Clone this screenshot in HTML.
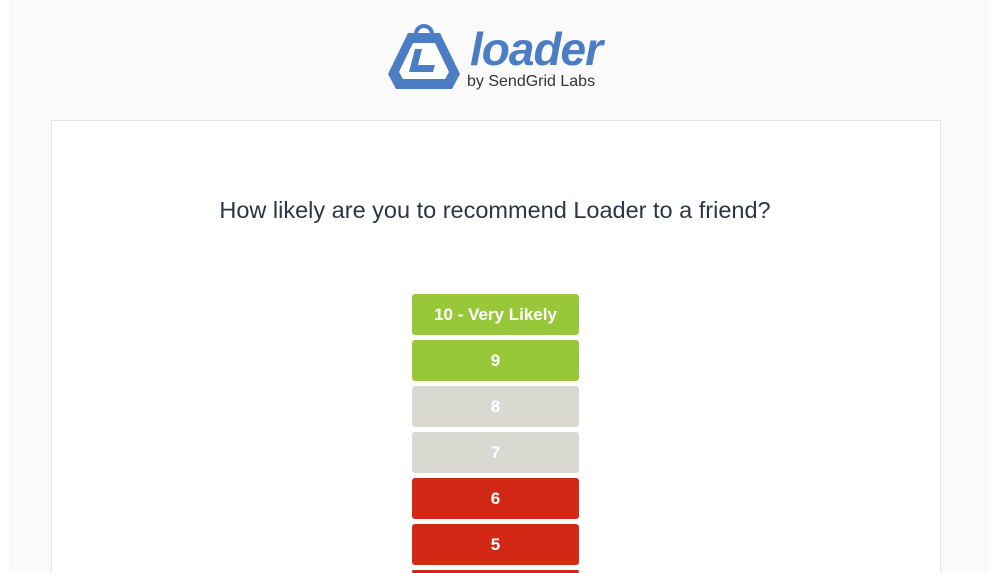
<!DOCTYPE html>
<html style="width:1000px;height:573px;overflow:hidden"><head><style>
body{margin:0;width:1000px;height:573px;overflow:hidden;position:relative;background:#fff;font-family:"Liberation Sans",sans-serif;}
.page{position:absolute;left:9px;top:0;width:981px;height:573px;background:#fafafa;}
.card{position:absolute;left:51px;top:120px;width:888px;height:470px;background:#fff;border:1px solid #e6e6e6;}
.q{position:absolute;left:0;width:990px;top:197px;text-align:center;font-size:23.5px;color:#2b3645;}
.btn{position:absolute;left:412px;width:167px;height:41px;border-radius:3px;color:#fff;font-weight:bold;font-size:17px;text-align:center;line-height:41px;}
.g{background:#98c83a}.n{background:#d9d9d2}.r{background:#d22816}
.logo{position:absolute;left:470px;top:22px;font-size:46px;font-weight:bold;font-style:italic;color:#4a7dc4;letter-spacing:-1px;}
.by{position:absolute;left:467px;top:73px;font-size:16px;color:#333;}
</style></head><body>
<div class="page"></div>
<svg style="position:absolute;left:386px;top:20px" width="76" height="72" viewBox="0 0 76 72">
<path d="M30 14 a8 8 0 0 1 16 0" fill="none" stroke="#4a7dc4" stroke-width="4"/>
<path d="M22 13 H54 L74 54 L66 69 H10 L2 54 Z" fill="#4a7dc4"/>
<path d="M27 23 H49 L63 52 L59 59 H17 L13 52 Z" fill="#fff"/>
<path d="M29 29 H36 L32 45 H49 L47 52 H23 Z" fill="#4a7dc4"/>
</svg>
<div class="logo">loader</div>
<div class="by">by SendGrid Labs</div>
<div class="card"></div>
<div class="q">How likely are you to recommend Loader to a friend?</div>
<div class="btn g" style="top:294px">10 - Very Likely</div>
<div class="btn g" style="top:340px">9</div>
<div class="btn n" style="top:386px">8</div>
<div class="btn n" style="top:432px">7</div>
<div class="btn r" style="top:478px">6</div>
<div class="btn r" style="top:524px">5</div>
<div class="btn r" style="top:570px;height:3px">4</div>
</body></html>
